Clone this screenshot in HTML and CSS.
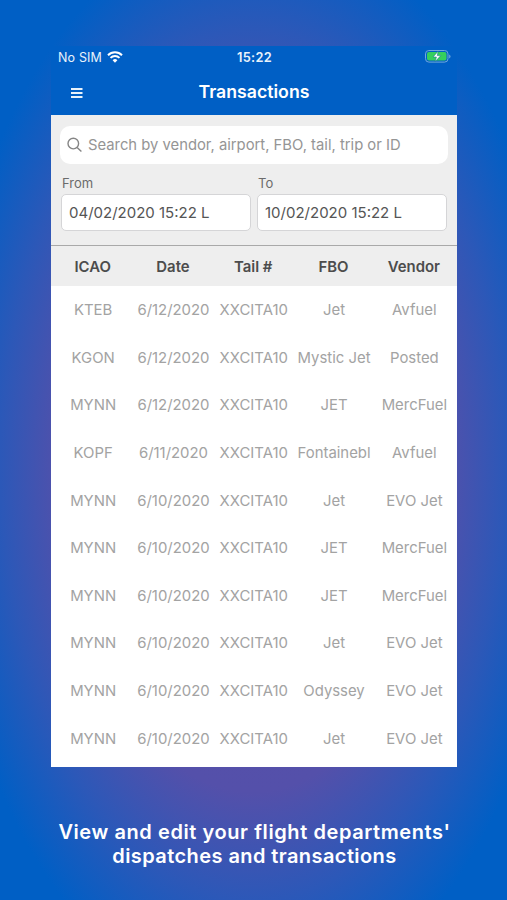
FILE: index.html
```html
<!DOCTYPE html>
<html lang="en">
<head>
    <meta charset="UTF-8">
    <meta name="viewport" content="width=device-width, initial-scale=1.0">
    <title>Transactions</title>
    <link rel="stylesheet" href="styles.css">
</head>
<body>
    <div class="phone">
        <header class="top">
            <div class="status-bar">
                <div class="carrier">
                    <span>No SIM</span>
                    <svg class="wifi" width="16" height="12" viewBox="0 0 16 12">
                        <path d="M1 4.2a10 10 0 0 1 14 0" />
                        <path d="M3.5 6.9a6.4 6.4 0 0 1 9 0" />
                        <path class="dot" d="M8 11.8L5.6 9.3a3.4 3.4 0 0 1 4.8 0z" />
                    </svg>
                </div>
                <span class="clock">15:22</span>
                <svg class="battery" width="26" height="13" viewBox="0 0 26 13">
                    <rect class="shell" x="0.5" y="0.5" width="22.5" height="11.6" rx="3.4" />
                    <rect class="charge" x="2" y="2" width="19.5" height="8.6" rx="2" />
                    <path class="tip" d="M24.2 4.4v4a2.2 2.2 0 0 0 0-4z" />
                    <path class="bolt" d="M13.2 1.2L8 7h3.4l-1.2 4.6L15.8 5.6h-3.5z" />
                </svg>
            </div>
            <div class="nav-bar">
                <svg class="menu" width="12" height="10" viewBox="0 0 12 10">
                    <path d="M0 1h11.5M0 5h11.5M0 9h11.5" />
                </svg>
                <h1>Transactions</h1>
            </div>
        </header>

        <section class="filters">
            <div class="search">
                <svg width="16" height="16" viewBox="0 0 16 16">
                    <circle cx="6.3" cy="6.6" r="5.3" />
                    <path d="M10.1 10.4l4.3 4.1" />
                </svg>
                <span>Search by vendor, airport, FBO, tail, trip or ID</span>
            </div>
            <div class="dates">
                <div class="field">
                    <label>From</label>
                    <div class="input">04/02/2020 15:22 L</div>
                </div>
                <div class="field">
                    <label>To</label>
                    <div class="input">10/02/2020 15:22 L</div>
                </div>
            </div>
        </section>

        <div class="row head">
            <span>ICAO</span><span>Date</span><span>Tail #</span><span>FBO</span><span>Vendor</span>
        </div>
        <div class="list">
            <div class="row"><span>KTEB</span><span>6/12/2020</span><span>XXCITA10</span><span>Jet</span><span>Avfuel</span></div>
            <div class="row"><span>KGON</span><span>6/12/2020</span><span>XXCITA10</span><span>Mystic Jet</span><span>Posted</span></div>
            <div class="row"><span>MYNN</span><span>6/12/2020</span><span>XXCITA10</span><span>JET</span><span>MercFuel</span></div>
            <div class="row"><span>KOPF</span><span>6/11/2020</span><span>XXCITA10</span><span>Fontainebl</span><span>Avfuel</span></div>
            <div class="row"><span>MYNN</span><span>6/10/2020</span><span>XXCITA10</span><span>Jet</span><span>EVO Jet</span></div>
            <div class="row"><span>MYNN</span><span>6/10/2020</span><span>XXCITA10</span><span>JET</span><span>MercFuel</span></div>
            <div class="row"><span>MYNN</span><span>6/10/2020</span><span>XXCITA10</span><span>JET</span><span>MercFuel</span></div>
            <div class="row"><span>MYNN</span><span>6/10/2020</span><span>XXCITA10</span><span>Jet</span><span>EVO Jet</span></div>
            <div class="row"><span>MYNN</span><span>6/10/2020</span><span>XXCITA10</span><span>Odyssey</span><span>EVO Jet</span></div>
            <div class="row"><span>MYNN</span><span>6/10/2020</span><span>XXCITA10</span><span>Jet</span><span>EVO Jet</span></div>
        </div>
    </div>

    <p class="caption"><span class="line-one">View and edit your flight departments'</span><br><span class="line-two">dispatches and transactions</span></p>
</body>
</html>
```
FILE: styles.css
```css
* {
    box-sizing: border-box;
}

body {
    margin: 0;
    height: 900px;
    padding-top: 46px;
    font-family: Inter, "Liberation Sans", sans-serif;
    background: #005fc5 radial-gradient(ellipse 315px 545px at 253px 465px, #5c4ea8 0%, #5450aa 60%, #2c58b8 80%, #005fc5 100%);
    overflow: hidden;
}

.phone {
    width: 406px;
    height: 721px;
    margin: 0 auto 0 51px;
    background: #fff;
}

.top {
    height: 69px;
    background: #005fc5;
    color: #e8f2fb;
}

.status-bar {
    display: grid;
    grid-template-columns: 1fr auto 1fr;
    align-items: center;
    height: 22px;
    padding: 0 6px 0 7px;
    font-size: 12.5px;
}

.carrier {
    display: flex;
    align-items: center;
    gap: 5px;
    letter-spacing: 0.15px;
}

.wifi path {
    fill: none;
    stroke: #fff;
    stroke-width: 2;
}

.wifi .dot {
    fill: #fff;
    stroke: none;
}

.clock {
    font-weight: 600;
    font-size: 12.8px;
    letter-spacing: 0.3px;
}

.battery {
    justify-self: end;
    margin-bottom: 2px;
}

.shell {
    fill: none;
    stroke: #6fa8dc;
}

.charge {
    fill: #35cf5d;
}

.tip {
    fill: #6fa8dc;
}

.bolt {
    fill: #fff;
    stroke: #1c7f8c;
    stroke-width: 0.6;
}

.nav-bar {
    display: grid;
    grid-template-columns: 1fr auto 1fr;
    align-items: center;
    height: 47px;
    padding-left: 20px;
    padding-right: 20px;
}

.menu {
    stroke: #e8f2fb;
    stroke-width: 1.9;
    margin-top: 3px;
}

h1 {
    margin: 0;
    color: #fff;
    font-size: 17.7px;
    font-weight: 600;
}

.filters {
    height: 131px;
    padding: 11px 9px 0;
    background: #eeeeee;
    border-bottom: 1px solid #a9a9a9;
}

.search {
    display: flex;
    align-items: center;
    gap: 5px;
    height: 38px;
    padding: 0 0 0 7px;
    border-radius: 10px;
    background: #fff;
    color: #959595;
    font-size: 14.8px;
}

.search svg {
    fill: none;
    stroke: #858585;
    stroke-width: 1.4;
}

.dates {
    display: flex;
    gap: 6px;
    padding: 11px 1px 0;
}

.field {
    width: 190px;
}

.field label {
    display: block;
    padding-left: 1px;
    margin-bottom: 2px;
    font-size: 13px;
    line-height: 17px;
    color: #6b6b6b;
}

.input {
    height: 37px;
    padding-left: 7px;
    border: 1px solid #d5d5d7;
    border-radius: 5px;
    background: #fff;
    color: #555;
    font-size: 15px;
    line-height: 35px;
}

.row {
    display: grid;
    grid-template-columns: repeat(5, 80.3px);
    align-items: center;
    height: 47.6px;
    padding-top: 1px;
    padding-left: 2px;
    text-align: center;
    white-space: nowrap;
    font-size: 14.9px;
    color: #a3a3a3;
}

.head {
    height: 40px;
    padding-left: 1.5px;
    background: #eeeeee;
    color: #4c4c4c;
    font-weight: 600;
}

.caption {
    margin: 54px 0 0;
    padding-left: 2px;
    text-align: center;
    color: #fff;
    font-size: 20px;
    font-weight: 600;
    line-height: 23.5px;
}

.line-one {
    letter-spacing: 0.58px;
}

.line-two {
    letter-spacing: 0.42px;
}
```
